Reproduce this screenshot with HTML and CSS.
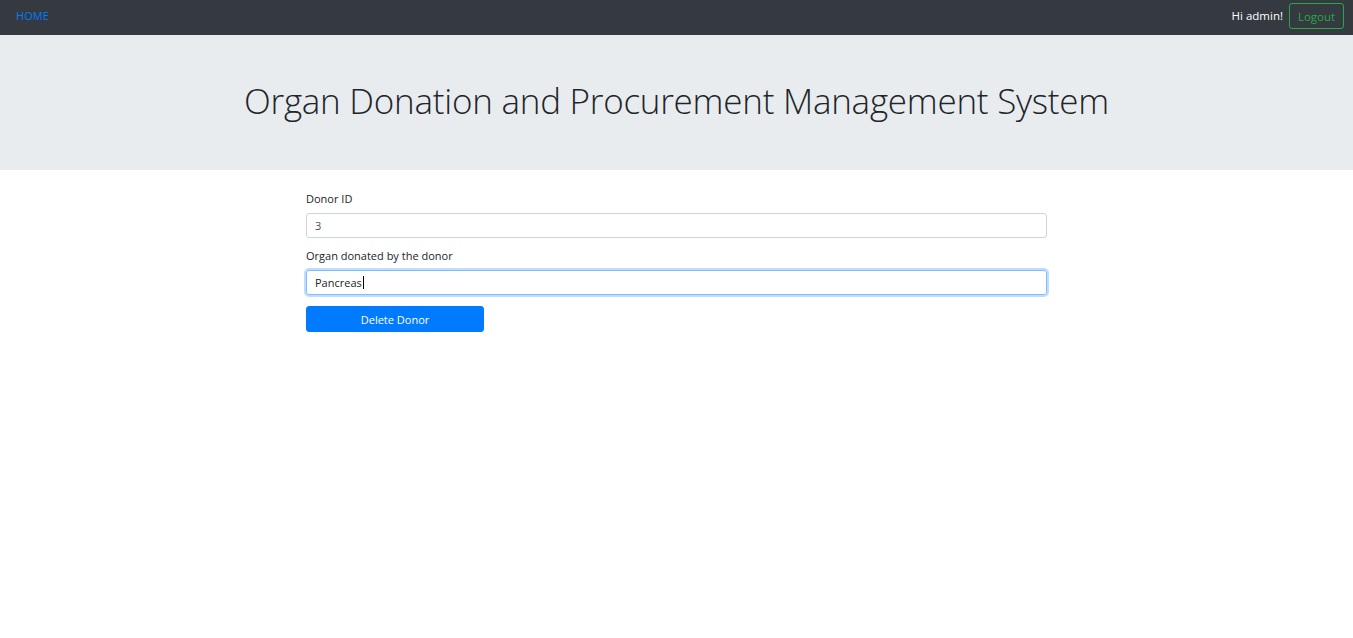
FILE: index.html
```html
<!DOCTYPE html>
<html>
<head>
<meta charset="utf-8">
<link rel="stylesheet" href="styles.css">
</head>
<body>
<nav class="navbar">
  <a class="nav-home" href="#">HOME</a>
  <div class="nav-right">
    <span class="greet">Hi admin!</span>
    <button class="btn-logout">Logout</button>
  </div>
</nav>
<header class="jumbo">
  <h1 class="title">Organ Donation and Procurement Management System</h1>
</header>
<main class="container">
  <form class="form">
    <div class="group">
      <label class="label">Donor ID</label>
      <input class="input" type="text" value="3">
    </div>
    <div class="group">
      <label class="label">Organ donated by the donor</label>
      <div class="input focused">Pancreas<span class="caret"></span></div>
    </div>
    <button type="button" class="btn-primary">Delete Donor</button>
  </form>
</main>
</body>
</html>
```
FILE: styles.css
```css
* { box-sizing: border-box; }
html, body { margin: 0; padding: 0; }
body {
  font-family: "Open Sans", "Noto Sans", sans-serif;
  color: #212529;
  background: #fff;
  width: 1353px;
  height: 638px;
  overflow: hidden;
}
.navbar {
  height: 35px;
  background: #343a40;
  display: flex;
  align-items: flex-start;
  justify-content: space-between;
  padding: 3px 9px 0 16px;
}
.nav-home {
  color: #007bff;
  text-decoration: none;
  font-size: 11px;
  line-height: 26px;
  letter-spacing: 0.1px;
}
.nav-right {
  display: flex;
  align-items: center;
  gap: 6px;
}
.greet {
  color: #fff;
  font-size: 11.5px;
  line-height: 26px;
}
.btn-logout {
  font-family: inherit;
  background: transparent;
  border: 1px solid #28a745;
  color: #28a745;
  border-radius: 3px;
  height: 26px;
  width: 55px;
  font-size: 11.5px;
  padding: 0;
}
.jumbo {
  height: 135px;
  background: #e9ecef;
  display: flex;
  align-items: center;
  justify-content: center;
}
.title {
  margin: 0 0 5px 0;
  font-weight: 300;
  font-size: 35px;
  letter-spacing: -0.25px;
}
.container {
  width: 741px;
  margin: 0 auto;
  padding-top: 21px;
}
.form {
  display: flex;
  flex-direction: column;
}
.group {
  display: flex;
  flex-direction: column;
  margin-bottom: 10px;
}
.label {
  font-size: 11px;
  margin-bottom: 6px;
  line-height: 16px;
}
.input {
  font-family: inherit;
  height: 25px;
  border: 1px solid #ced4da;
  border-radius: 3px;
  padding: 0 8px;
  font-size: 11px;
  color: #495057;
  display: flex;
  align-items: center;
  outline: none;
}
.focused {
  border-color: #80bdff;
  box-shadow: 0 0 0 2px rgba(0, 123, 255, 0.25);
  color: #212529;
}
.caret {
  display: inline-block;
  width: 1px;
  height: 13px;
  background: #000;
  margin-left: 1px;
}
.btn-primary {
  font-family: inherit;
  width: 178px;
  height: 26px;
  margin-top: 1px;
  background: #007bff;
  border: 1px solid #007bff;
  border-radius: 3px;
  color: #fff;
  font-size: 11px;
  padding: 0;
}
```
